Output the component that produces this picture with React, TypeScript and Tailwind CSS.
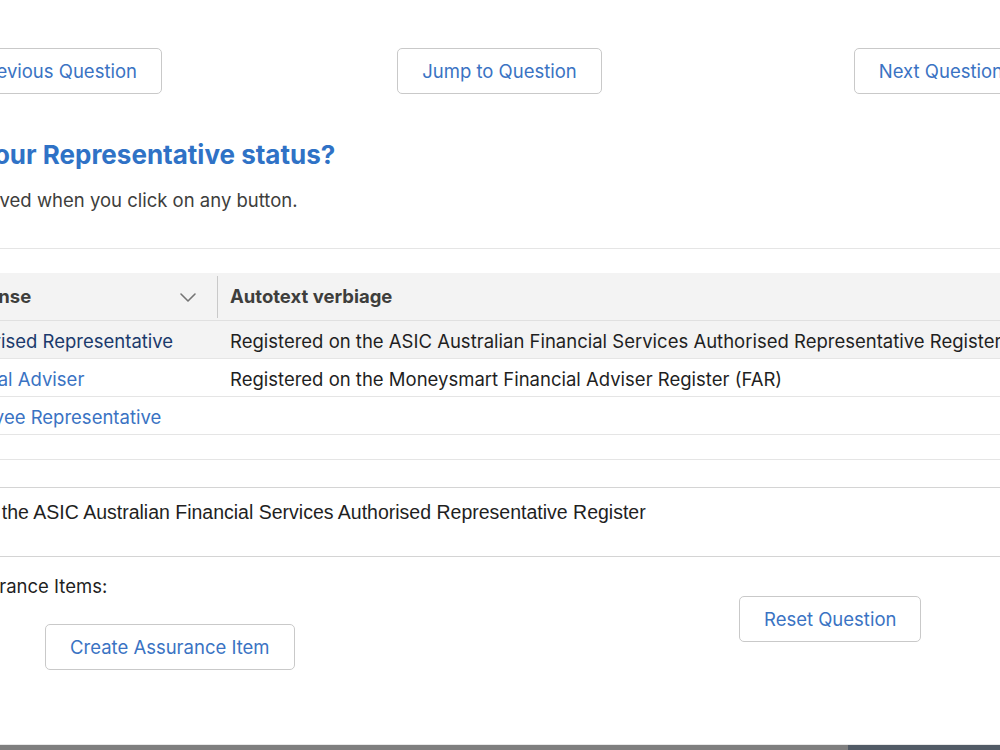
import React from "react";

const ui = { fontFamily: "Inter, 'Noto Sans', sans-serif" };
const rt = { fontFamily: "'Liberation Sans', Arial, sans-serif" };

function Btn({ children, className = "" }: { children: React.ReactNode; className?: string }) {
  return (
    <button
      className={`h-[46px] px-[24px] border border-[#c9c9c9] rounded-[5px] bg-white text-[#3a73c3] text-[18.5px] leading-[24px] whitespace-nowrap ${className}`}
      style={ui}
    >
      {children}
    </button>
  );
}

function Chevron() {
  return (
    <svg width="18" height="12" viewBox="0 0 18 12" fill="none">
      <path d="M2 3 L9 10 L16 3" stroke="#747474" strokeWidth="1.6" strokeLinecap="round" strokeLinejoin="round" />
    </svg>
  );
}

export default function App() {
  return (
    <div className="w-[1000px] h-[750px] overflow-hidden bg-white flex flex-col" style={ui}>
      <div className="flex-1 overflow-hidden">
        <div className="-ml-[150px] w-[1300px]">
          {/* Nav buttons */}
          <div className="grid grid-cols-3 items-center pt-[48px] pl-[103px] pr-[122px]">
            <div className="justify-self-start">
              <Btn>Previous Question</Btn>
            </div>
            <div className="justify-self-center">
              <Btn className="relative left-[9px]">Jump to Question</Btn>
            </div>
            <div className="justify-self-end">
              <Btn>Next Question</Btn>
            </div>
          </div>

          {/* Heading */}
          <div className="mt-[44px]">
            <h1 className="pl-[27px] text-[26px] leading-[34px] font-bold text-[#2f72c6]">What is your Representative status?</h1>
            <p className="pl-[39px] mt-[16px] text-[18.5px] leading-[24px] text-[#3e3e3c]">Answer is saved when you click on any button.</p>
          </div>

          <div className="mt-[36px] border-t border-[#e5e5e5]" />

          {/* Table */}
          <div className="mt-[24px] text-[18.5px]">
            <div className="flex h-[48px] bg-[#f3f3f3] border-b border-[#e0e0e0] items-center font-bold text-[#3e3e3c]">
              <div className="w-[367px] h-full flex items-center pl-[92px] pr-[20px] justify-between">
                <span>Response</span>
                <Chevron />
              </div>
              <div className="w-px h-[42px] bg-[#c9c9c9]" />
              <div className="pl-[12px]">Autotext verbiage</div>
            </div>
            <div className="flex h-[38px] bg-[#f3f3f3] border-b border-[#e5e5e5] items-center pt-[4px]">
              <div className="w-[368px] pl-[92px] text-[#1b3a6c]">Authorised Representative</div>
              <div className="pl-[12px] text-[#1f1f1f] whitespace-nowrap">
                Registered on the ASIC Australian Financial Services Authorised Representative Register
              </div>
            </div>
            <div className="flex h-[38px] border-b border-[#e5e5e5] items-center pt-[4px]">
              <div className="w-[368px] pl-[85px] text-[#3a73c3]">Financial Adviser</div>
              <div className="pl-[19px] text-[#1f1f1f] whitespace-nowrap -ml-[7px]">
                Registered on the Moneysmart Financial Adviser Register (FAR)
              </div>
            </div>
            <div className="flex h-[38px] border-b border-[#e5e5e5] items-center pt-[4px]">
              <div className="w-[368px] pl-[90px] text-[#3a73c3]">Employee Representative</div>
              <div className="pl-[12px]" />
            </div>
            <div className="h-[25px] border-b border-[#e5e5e5]" />
          </div>

          {/* Rich text */}
          <div className="mt-[27px] border-t border-b border-[#d4d4d4] pt-[12px] pb-[32px] pl-[25px] text-[19.5px] leading-[24px] text-[#1f1f1f] whitespace-nowrap" style={rt}>
            Registered on the ASIC Australian Financial Services Authorised Representative Register
          </div>

          {/* Assurance */}
          <div className="flex items-start mt-[17px]">
            <div className="w-[700px] pl-[106px] flex flex-col items-start">
              <div className="text-[18.5px] leading-[24px] text-[#1f1f1f]">Assurance Items:</div>
              <Btn className="ml-[89px] mt-[26px] h-[45px]">Create Assurance Item</Btn>
            </div>
            <div className="pl-[189px] pt-[22px]">
              <Btn>Reset Question</Btn>
            </div>
          </div>
        </div>
      </div>
      <div className="h-px bg-[#e8e8e8]" />
      <div className="h-[5px] flex">
        <div className="w-[848px] bg-[#7f7f7f]" />
        <div className="flex-1 bg-[#525b66]" />
      </div>
    </div>
  );
}
